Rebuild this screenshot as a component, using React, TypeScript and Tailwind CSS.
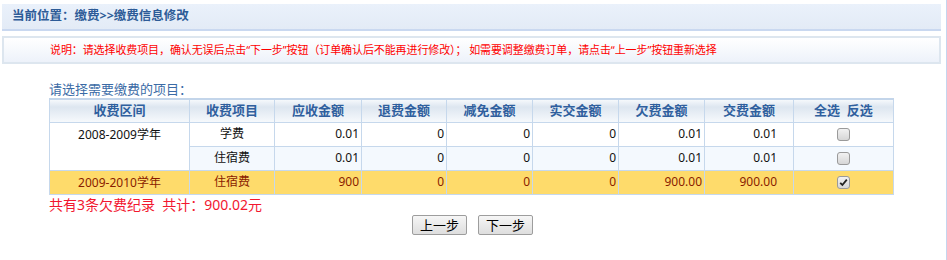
const font = {fontFamily: '"Noto Sans", "Noto Sans CJK SC", sans-serif'};
const cjk = {fontFamily: '"Noto Sans CJK SC", sans-serif'};

type Row = {
	term?: string;
	span?: number;
	item: string;
	due: string;
	refund: string;
	cut: string;
	paid: string;
	owe: string;
	pay: string;
	checked: boolean;
	tone: "white" | "blue" | "gold";
};

const rows: Row[] = [
	{term: "2008-2009学年", span: 2, item: "学费", due: "0.01", refund: "0", cut: "0", paid: "0", owe: "0.01", pay: "0.01", checked: false, tone: "white"},
	{item: "住宿费", due: "0.01", refund: "0", cut: "0", paid: "0", owe: "0.01", pay: "0.01", checked: false, tone: "blue"},
	{term: "2009-2010学年", span: 1, item: "住宿费", due: "900", refund: "0", cut: "0", paid: "0", owe: "900.00", pay: "900.00", checked: true, tone: "gold"},
];

const heads = ["收费区间", "收费项目", "应收金额", "退费金额", "减免金额", "实交金额", "欠费金额", "交费金额"];
const widths = ["w-[140px]", "w-[85px]", "w-[87px]", "w-[85px]", "w-[86px]", "w-[86px]", "w-[86px]", "w-[89px]", "w-[100px]"];

function Box({checked}: {checked: boolean}) {
	return (
		<span className="inline-flex h-[13px] w-[13px] items-center justify-center rounded-[3px] border border-[#9a9a9a] bg-gradient-to-b from-[#f2f2f2] to-[#d6d6d6] align-middle">
			{checked && (
				<svg width="9" height="9" viewBox="0 0 9 9">
					<path d="M1.2 4.8 L3.4 7 L7.8 1.6" fill="none" stroke="#222" strokeWidth="1.8" />
				</svg>
			)}
		</span>
	);
}

export default function App() {
	return (
		<div className="h-[260px] w-[947px] border-r border-[#c5d5ee] bg-white" style={font}>
			<div className="pt-[4px] pl-[2px] pr-[5px]">
				<div className="flex h-[27px] items-center border-b-2 border-[#c9d8f0] bg-gradient-to-b from-[#eaf1fb] to-[#e3ebf6] pl-[10px] text-[12.5px] font-bold text-[#2d5b97]">
					当前位置：缴费&gt;&gt;缴费信息修改
				</div>
				<div className="mt-[5px] flex h-[28px] items-center border-2 border-[#dde6ef] bg-gradient-to-b from-white to-[#edf2fa] pl-[46px] text-[11px] tracking-[-0.1px] text-[#ff0000]">
					说明：请选择收费项目，确认无误后点击“下一步”按钮（订单确认后不能再进行修改）； 如需要调整缴费订单，请点击“上一步”按钮重新选择
				</div>
			</div>

			<div className="mt-[16px] pl-[49px] text-[13px] leading-[18px] text-[#3b6ba6]">请选择需要缴费的项目：</div>

			<table className="ml-[49px] w-[845px] table-fixed border-t-2 border-[#c3d5ea] text-[12px]">
				<thead>
					<tr className="h-[23px] bg-[linear-gradient(#f9fbfd_0%,#dde6f0_35%,#f6f9fc_100%)] text-[13px] font-bold text-[#2f5f9e]">
						{heads.map((h, i) => (
							<th key={h} className={`${widths[i]} border border-[#c6d8ec] font-bold`}>
								{h}
							</th>
						))}
						<th className={`${widths[8]} border border-[#c6d8ec] font-bold`}>
							全选&nbsp;&nbsp;反选
						</th>
					</tr>
				</thead>
				<tbody>
					{rows.map((r, i) => {
						const gold = r.tone === "gold";
						const bg = gold ? "bg-[#fedb6b] text-[#8a1c00]" : r.tone === "blue" ? "bg-[#f4f9fe] text-[#111]" : "bg-white text-[#111]";
						return (
							<tr key={i} className={`h-[24px] ${bg}`}>
								{r.term && (
									<td rowSpan={r.span} className={`border border-[#c6d8ec] text-center align-top leading-[23px] ${gold ? "bg-[#fedb6b]" : "bg-white"}`}>
										{r.term}
									</td>
								)}
								<td className="border border-[#c6d8ec] text-center">{r.item}</td>
								<td className="border border-[#c6d8ec] pr-[2px] text-right">{r.due}</td>
								<td className="border border-[#c6d8ec] pr-[2px] text-right">{r.refund}</td>
								<td className="border border-[#c6d8ec] pr-[2px] text-right">{r.cut}</td>
								<td className="border border-[#c6d8ec] pr-[2px] text-right">{r.paid}</td>
								<td className="border border-[#c6d8ec] pr-[2px] text-right">{r.owe}</td>
								<td className="border border-[#c6d8ec] pr-[16px] text-right">{r.pay}</td>
								<td className="border border-[#c6d8ec] text-center">
									<Box checked={r.checked} />
								</td>
							</tr>
						);
					})}
				</tbody>
			</table>

			<div className="mt-[1px] pl-[49px] text-[14px] leading-[18px] text-[#f2172f]">共有3条欠费纪录&nbsp;&nbsp;共计：900.02元</div>

			<div className="mt-[1px] flex justify-center gap-[11px] pr-[1px]">
				{["上一步", "下一步"].map((b) => (
					<button
						key={b}
						className="h-[20px] w-[55px] rounded-[2px] border border-[#9d9d9d] bg-gradient-to-b from-[#f6f6f6] to-[#dedede] text-[13px] leading-[18px] text-black"
						style={cjk}
					>
						{b}
					</button>
				))}
			</div>
		</div>
	);
}
